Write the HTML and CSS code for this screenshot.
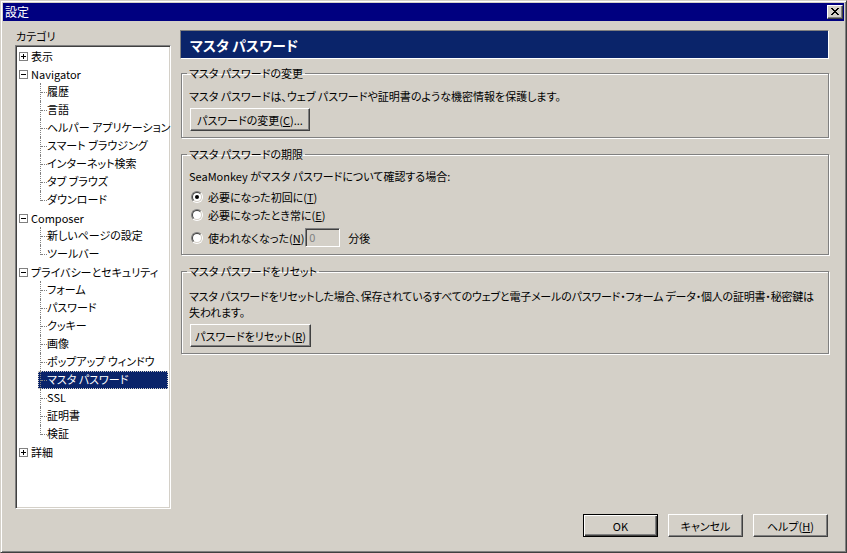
FILE: index.html
```html
<!DOCTYPE html>
<html lang="ja">
<head>
<meta charset="utf-8">
<title>設定</title>
<link rel="stylesheet" href="styles.css">
</head>
<body>
<div class="window">
  <div class="titlebar">
    <span class="title">設定</span>
    <span class="close"><svg width="8" height="7" viewBox="0 0 8 7" shape-rendering="crispEdges"><path fill="#000" d="M0 0h2v1H0zM6 0h2v1H6zM1 1h2v1H1zM5 1h2v1H5zM2 2h4v1H2zM3 3h2v1H3zM2 4h4v1H2zM1 5h2v1H1zM5 5h2v1H5zM0 6h2v1H0zM6 6h2v1H6z"/></svg></span>
  </div>
  <div class="body">
    <div class="main">
      <div class="side">
        <div class="side-label">カテゴリ</div>
        <div class="tree">
          <div class="row top"><svg class="exp" width="9" height="9" viewBox="0 0 9 9" shape-rendering="crispEdges"><rect x="0.5" y="0.5" width="8" height="8" fill="#fff" stroke="#808080"/><path fill="#000" d="M2 4h5v1H2zM4 2h1v5H4z"/></svg><span class="lbl">表示</span></div>
          <div class="row top"><svg class="exp" width="9" height="9" viewBox="0 0 9 9" shape-rendering="crispEdges"><rect x="0.5" y="0.5" width="8" height="8" fill="#fff" stroke="#808080"/><path fill="#000" d="M2 4h5v1H2z"/></svg><span class="lbl">Navigator</span></div>
          <div class="row child"><div class="item"><span class="conn"></span><span class="lbl">履歴</span></div></div>
          <div class="row child"><div class="item"><span class="conn"></span><span class="lbl">言語</span></div></div>
          <div class="row child"><div class="item"><span class="conn"></span><span class="lbl">ヘルパー アプリケーション</span></div></div>
          <div class="row child"><div class="item"><span class="conn"></span><span class="lbl">スマート ブラウジング</span></div></div>
          <div class="row child"><div class="item"><span class="conn"></span><span class="lbl">インターネット検索</span></div></div>
          <div class="row child"><div class="item"><span class="conn"></span><span class="lbl">タブ ブラウズ</span></div></div>
          <div class="row child"><div class="item"><span class="conn last"></span><span class="lbl">ダウンロード</span></div></div>
          <div class="row top"><svg class="exp" width="9" height="9" viewBox="0 0 9 9" shape-rendering="crispEdges"><rect x="0.5" y="0.5" width="8" height="8" fill="#fff" stroke="#808080"/><path fill="#000" d="M2 4h5v1H2z"/></svg><span class="lbl">Composer</span></div>
          <div class="row child"><div class="item"><span class="conn"></span><span class="lbl">新しいページの設定</span></div></div>
          <div class="row child"><div class="item"><span class="conn last"></span><span class="lbl">ツールバー</span></div></div>
          <div class="row top"><svg class="exp" width="9" height="9" viewBox="0 0 9 9" shape-rendering="crispEdges"><rect x="0.5" y="0.5" width="8" height="8" fill="#fff" stroke="#808080"/><path fill="#000" d="M2 4h5v1H2z"/></svg><span class="lbl">プライバシーとセキュリティ</span></div>
          <div class="row child"><div class="item"><span class="conn"></span><span class="lbl">フォーム</span></div></div>
          <div class="row child"><div class="item"><span class="conn"></span><span class="lbl">パスワード</span></div></div>
          <div class="row child"><div class="item"><span class="conn"></span><span class="lbl">クッキー</span></div></div>
          <div class="row child"><div class="item"><span class="conn"></span><span class="lbl">画像</span></div></div>
          <div class="row child"><div class="item"><span class="conn"></span><span class="lbl">ポップアップ ウィンドウ</span></div></div>
          <div class="row child"><div class="item sel"><span class="conn"></span><span class="lbl">マスタ パスワード</span></div></div>
          <div class="row child"><div class="item"><span class="conn"></span><span class="lbl">SSL</span></div></div>
          <div class="row child"><div class="item"><span class="conn"></span><span class="lbl">証明書</span></div></div>
          <div class="row child"><div class="item"><span class="conn last"></span><span class="lbl">検証</span></div></div>
          <div class="row top"><svg class="exp" width="9" height="9" viewBox="0 0 9 9" shape-rendering="crispEdges"><rect x="0.5" y="0.5" width="8" height="8" fill="#fff" stroke="#808080"/><path fill="#000" d="M2 4h5v1H2zM4 2h1v5H4z"/></svg><span class="lbl">詳細</span></div>
        </div>
      </div>
      <div class="panel">
        <div class="header">マスタ パスワード</div>
        <fieldset class="group g1">
          <legend>マスタ パスワードの変更</legend>
          <div class="line">マスタ パスワードは、ウェブ パスワードや証明書のような機密情報を保護します。</div>
          <button class="btn change">パスワードの変更(<u>C</u>)...</button>
        </fieldset>
        <fieldset class="group g2">
          <legend>マスタ パスワードの期限</legend>
          <div class="line">SeaMonkey がマスタ パスワードについて確認する場合:</div>
          <div class="radio-row r1"><span class="radio"><span class="in checked"></span></span><span>必要になった初回に(<u>T</u>)</span></div>
          <div class="radio-row r2"><span class="radio"><span class="in"></span></span><span>必要になったとき常に(<u>E</u>)</span></div>
          <div class="radio-row r3"><span class="radio"><span class="in"></span></span><span class="r3-label">使われなくなった(<u>N</u>)</span><span class="num">0</span><span class="unit">分後</span></div>
        </fieldset>
        <fieldset class="group g3">
          <legend>マスタ パスワードをリセット</legend>
          <div class="line wrap">マスタ パスワードをリセットした場合、保存されているすべてのウェブと電子メールのパスワード・フォーム データ・個人の証明書・秘密鍵は<br>失われます。</div>
          <button class="btn reset">パスワードをリセット(<u>R</u>)</button>
        </fieldset>
      </div>
    </div>
    <div class="footer">
      <button class="btn dlg default">OK</button>
      <button class="btn dlg">キャンセル</button>
      <button class="btn dlg">ヘルプ(<u>H</u>)</button>
    </div>
  </div>
</div>
</body>
</html>
```

FILE: styles.css
```css
html, body {
  margin: 0;
  padding: 0;
  background: #D4D0C8;
}
body {
  font-family: "Noto Sans CJK JP", "Noto Sans", sans-serif;
  font-size: 11px;
  font-feature-settings: "palt";
  color: #000;
}
.window {
  width: 847px;
  height: 553px;
  box-sizing: border-box;
  border: 1px solid;
  border-color: #D4D0C8 #404040 #404040 #D4D0C8;
  box-shadow: inset 1px 1px 0 #fff, inset -1px -1px 0 #808080;
  padding: 2px;
  display: flex;
  flex-direction: column;
  background: #D4D0C8;
}
.titlebar {
  height: 18px;
  flex: none;
  background: #000080;
  display: flex;
  align-items: center;
  padding-left: 2px;
}
.title {
  color: #fff;
  font-size: 12px;
  line-height: 18px;
}
.close {
  margin-left: auto;
  margin-right: 1px;
  width: 16px;
  height: 14px;
  box-sizing: border-box;
  background: #D4D0C8;
  border: 1px solid;
  border-color: #fff #404040 #404040 #fff;
  box-shadow: inset -1px -1px 0 #808080;
  display: flex;
  align-items: center;
  justify-content: center;
  padding: 0 1px 1px 0;
}
.close svg { display: block; }
.body {
  flex: 1;
  display: flex;
  flex-direction: column;
  padding: 9px 15px 13px 12px;
}
.main {
  height: 479px;
  display: flex;
}
.side {
  width: 156px;
  display: flex;
  flex-direction: column;
}
.side-label {
  height: 15px;
  line-height: 13px;
  padding-left: 1px;
}
.tree {
  flex: 1;
  background: #fff;
  border: 1px solid;
  border-color: #808080 #fff #fff #808080;
  box-shadow: inset 1px 1px 0 #404040, inset -1px -1px 0 #D4D0C8;
  padding: 1px;
}
.row {
  height: 18px;
  display: flex;
  align-items: center;
}
.row.top { padding-left: 2px; }
.exp { display: block; flex: none; margin-right: 3px; }
.lbl {
  line-height: 17px;
  white-space: nowrap;
}
.row.child { padding-left: 21px; }
.item {
  flex: 1;
  height: 18px;
  margin-right: 1px;
  display: flex;
  align-items: stretch;
  box-sizing: border-box;
}
.conn {
  flex: none;
  width: 6px;
  margin-left: 2px;
  border-left: 1px dotted #808080;
}
.conn::after {
  content: "";
  display: block;
  margin-top: 9px;
  border-top: 1px dotted #808080;
}
.conn.last {
  align-self: flex-start;
  height: 10px;
}
.item.sel {
  background: #0A246A;
  color: #fff;
  outline: 1px dotted #D4D0C8;
  outline-offset: -1px;
}
.panel {
  width: 649px;
  margin-left: 9px;
  display: flex;
  flex-direction: column;
}
.header {
  height: 29px;
  box-sizing: border-box;
  border: 1px solid;
  border-color: #808080 #fff #fff #808080;
  background: #0A246A;
  color: #fff;
  font-weight: bold;
  font-size: 14px;
  padding-left: 9px;
  display: flex;
  align-items: center;
}
.group {
  margin: 7px 0 0 1px;
  border: 1px solid #808080;
  box-shadow: inset 1px 1px 0 #fff, 1px 1px 0 #fff;
  padding: 0 8px 6px 7px;
  min-width: 0;
}
.group legend {
  padding: 0 2px;
  margin-left: -2px;
  line-height: 14px;
}
.g2 { margin-top: 9px; }
.g3 { margin-top: 9px; }
.line {
  line-height: 16px;
}
.g1 .line { margin-top: 8px; }
.g2 .line { margin-top: 7px; }
.g3 .line {
  margin-top: 10px;
  white-space: nowrap;
  letter-spacing: -0.2px;
}
.btn {
  font-family: inherit;
  font-size: 11px;
  font-feature-settings: "palt";
  color: #000;
  height: 23px;
  box-sizing: border-box;
  background: #D4D0C8;
  border: 1px solid;
  border-color: #fff #404040 #404040 #fff;
  box-shadow: inset -1px -1px 0 #808080;
  padding: 0 4px;
  margin: 0;
  display: flex;
  align-items: center;
  justify-content: center;
  white-space: nowrap;
}
.btn u { text-underline-offset: 1px; }
.change {
  width: 120px;
  margin: 4px 0 0 1px;
}
.reset {
  width: 121px;
  margin: 4px 0 0 1px;
}
.radio-row {
  display: flex;
  align-items: center;
  height: 16px;
  line-height: 16px;
  white-space: nowrap;
}
.r1 { margin-top: 5px; }
.r2 { margin-top: 2px; }
.r3 { margin-top: 5px; height: 19px; margin-bottom: 1px; }
.r3-label { min-width: 95px; flex: none; }
.radio {
  flex: none;
  width: 12px;
  height: 12px;
  box-sizing: border-box;
  border-radius: 50%;
  border: 1px solid;
  border-color: #808080 #fff #fff #808080;
  margin: 0 5px 0 2px;
}
.radio .in {
  display: flex;
  width: 100%;
  height: 100%;
  box-sizing: border-box;
  border-radius: 50%;
  border: 1px solid;
  border-color: #404040 #D4D0C8 #D4D0C8 #404040;
  background: #fff;
  align-items: center;
  justify-content: center;
}
.radio .in.checked::after {
  content: "";
  display: block;
  width: 4px;
  height: 4px;
  border-radius: 50%;
  background: #000;
}
.num {
  flex: none;
  width: 35px;
  height: 19px;
  box-sizing: border-box;
  margin-left: 1px;
  border: 1px solid;
  border-color: #808080 #fff #fff #808080;
  box-shadow: inset 1px 1px 0 #404040, inset -1px -1px 0 #D4D0C8;
  background: #D4D0C8;
  color: #808080;
  padding-left: 3px;
  line-height: 17px;
}
.unit { margin-left: 8px; }
.footer {
  margin-top: 5px;
  display: flex;
  justify-content: flex-end;
  gap: 10px;
  padding-right: 1px;
}
.dlg { width: 75px; }
.btn.default {
  border: 1px solid #000;
  box-shadow: inset 1px 1px 0 #fff, inset -1px -1px 0 #404040, inset -2px -2px 0 #808080;
}
```
